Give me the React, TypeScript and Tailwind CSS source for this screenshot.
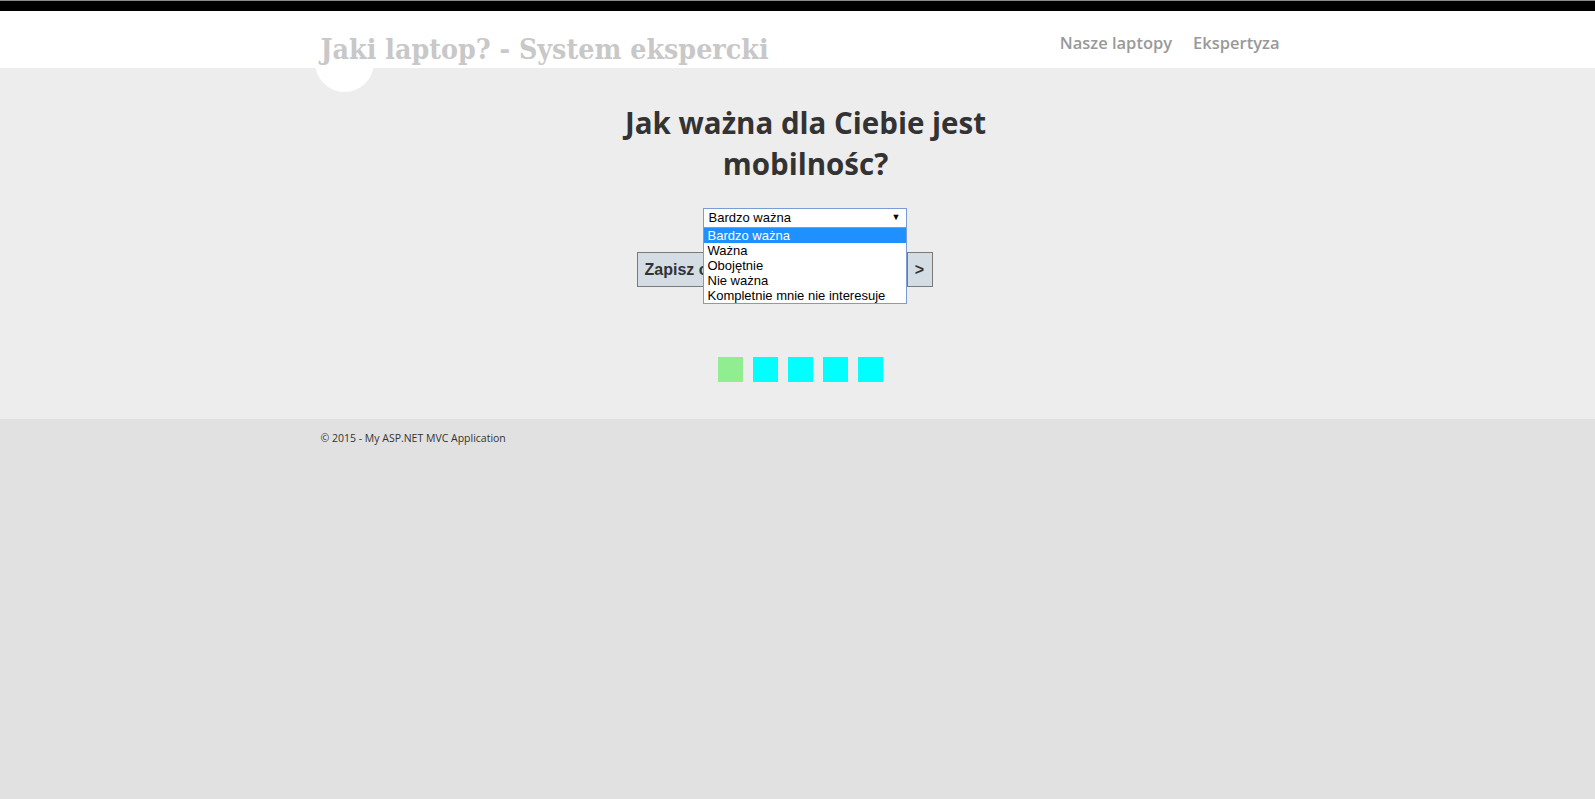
import { Fragment } from 'react';

const options = ['Bardzo ważna', 'Ważna', 'Obojętnie', 'Nie ważna', 'Kompletnie mnie nie interesuje'];
const steps = ['done', 'todo', 'todo', 'todo', 'todo'];

export default function App() {
  return (
    <div className="min-h-screen bg-[#e1e1e1]">
      {/* top strip */}
      <div className="h-px bg-[#8a8a8a]" />
      <div className="h-[10px] bg-black" />

      {/* header */}
      <header className="relative z-10 h-[57px] bg-white">
        <div className="relative mx-auto flex h-full w-[960px] items-start justify-between">
          <div className="absolute left-[-3px] top-[22px] h-[59px] w-[59px] rounded-full bg-white" />
          <h1
            className="relative mt-[20px] ml-[3px] text-[28.3px] font-bold leading-[36px] text-[#c8c8c8]"
            style={{ fontFamily: '"DejaVu Serif Condensed", "DejaVu Serif", serif' }}
          >
            Jaki laptop? - System ekspercki
          </h1>
          <nav
            className="mt-[20px] mr-[-2px] flex gap-[21px] text-[16.5px] font-semibold text-[#999999]"
            style={{ fontFamily: '"Open Sans", sans-serif' }}
          >
            <a>Nasze laptopy</a>
            <a>Ekspertyza</a>
          </nav>
        </div>
      </header>

      {/* main */}
      <main className="h-[351px] bg-[#ededed]">
        <div className="mx-auto w-[960px] pt-[34px]">
          <h2
            className="ml-[16px] text-center text-[29.5px] font-bold leading-[41px] text-[#333333]"
            style={{ fontFamily: '"Open Sans", sans-serif' }}
          >
            Jak ważna dla Ciebie jest
            <br />
            mobilnośc?
          </h2>

          <div
            className="relative mt-[24px] ml-[319px] w-[296px]"
            style={{ fontFamily: '"Liberation Sans", Arial, sans-serif' }}
          >
            <div className="ml-[66px] flex h-[20px] w-[204px] items-center justify-between border border-[#7a9cd3] bg-white pl-[5px] pr-[5px] text-[13px] text-black">
              <span>Bardzo ważna</span>
              <span className="text-[9px]">▼</span>
            </div>

            <div className="mt-[24px] flex h-[35px] gap-[1px]">
              <button className="h-full w-[269px] border border-[#7a7a7a] bg-[#d5dde4] pl-[7px] text-left text-[16px] font-bold text-[#333333]">
                Zapisz odpowiedź
              </button>
              <button className="h-full w-[26px] border border-[#7a7a7a] bg-[#d5dde4] text-[16px] font-bold text-[#333333]">
                &gt;
              </button>
            </div>

            <ul className="absolute left-[66px] top-[20px] w-[204px] border border-[#7a9cd3] border-t-0 bg-white text-[13px] leading-[15px] text-black">
              {options.map((o, i) => (
                <Fragment key={o}>
                  <li className={i === 0 ? 'bg-[#1e90ff] px-[4px] text-white' : 'px-[4px]'}>{o}</li>
                </Fragment>
              ))}
            </ul>
          </div>

          <div className="mt-[70px] ml-[6px] flex justify-center gap-[10px]">
            {steps.map((s, i) => (
              <div key={i} className={s === 'done' ? 'h-[25px] w-[25px] bg-[#90ee90]' : 'h-[25px] w-[25px] bg-[#00ffff]'} />
            ))}
          </div>
        </div>
      </main>

      {/* footer */}
      <footer className="mx-auto w-[960px] pt-[12px]">
        <p
          className="ml-[3px] text-[10.5px] text-[#333333]"
          style={{ fontFamily: '"Open Sans", sans-serif' }}
        >
          © 2015 - My ASP.NET MVC Application
        </p>
      </footer>
    </div>
  );
}
